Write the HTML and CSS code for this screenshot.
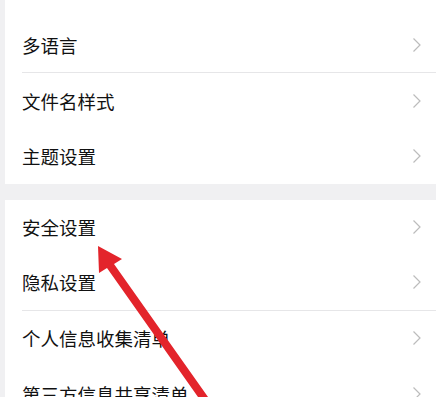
FILE: index.html
```html
<!DOCTYPE html>
<html lang="zh-CN">
<head>
<meta charset="utf-8">
<link rel="stylesheet" href="styles.css">
</head>
<body>
<div class="page">
  <div class="card card-top">
    <div class="spacer"></div>
    <div class="row divided"><span class="label">多语言</span><svg class="chev" viewBox="0 0 10 16"><polyline points="1.5,1.5 8,8 1.5,14.5"/></svg></div>
    <div class="row"><span class="label">文件名样式</span><svg class="chev" viewBox="0 0 10 16"><polyline points="1.5,1.5 8,8 1.5,14.5"/></svg></div>
    <div class="row"><span class="label">主题设置</span><svg class="chev" viewBox="0 0 10 16"><polyline points="1.5,1.5 8,8 1.5,14.5"/></svg></div>
  </div>
  <div class="card">
    <div class="row"><span class="label">安全设置</span><svg class="chev" viewBox="0 0 10 16"><polyline points="1.5,1.5 8,8 1.5,14.5"/></svg></div>
    <div class="row divided"><span class="label">隐私设置</span><svg class="chev" viewBox="0 0 10 16"><polyline points="1.5,1.5 8,8 1.5,14.5"/></svg></div>
    <div class="row"><span class="label">个人信息收集清单</span><svg class="chev" viewBox="0 0 10 16"><polyline points="1.5,1.5 8,8 1.5,14.5"/></svg></div>
    <div class="row"><span class="label">第三方信息共享清单</span><svg class="chev" viewBox="0 0 10 16"><polyline points="1.5,1.5 8,8 1.5,14.5"/></svg></div>
  </div>
</div>
<svg class="arrow" viewBox="0 0 436 397" width="436" height="397">
  <polygon points="98,246 122,259 114,264 208,397 198,397 107,268 99,273"/>
</svg>
</body>
</html>
```
FILE: styles.css
```css
html, body {
  margin: 0;
  padding: 0;
  background: #f0f0f2;
  overflow: hidden;
}
.page {
  width: 436px;
  height: 397px;
  padding-left: 5px;
  box-sizing: border-box;
  display: flex;
  flex-direction: column;
  gap: 15.5px;
  font-family: "Noto Sans CJK SC", "Noto Sans", sans-serif;
}
.card {
  background: #ffffff;
  display: flex;
  flex-direction: column;
}
.spacer {
  height: 17.5px;
}
.row {
  height: 55.5px;
  box-sizing: border-box;
  margin-left: 17px;
  padding-right: 14px;
  display: flex;
  align-items: center;
  justify-content: space-between;
  flex-shrink: 0;
}
.row.divided {
  border-bottom: 1px solid #e6e6e8;
}
.label {
  font-size: 18.5px;
  color: #111111;
  line-height: 1;
}
.chev {
  width: 10px;
  height: 16px;
  fill: none;
  stroke: #bcbcbc;
  stroke-width: 1.2;
}
.arrow {
  position: absolute;
  left: 0;
  top: 0;
  pointer-events: none;
}
.arrow polygon {
  fill: #e3242b;
}
```
